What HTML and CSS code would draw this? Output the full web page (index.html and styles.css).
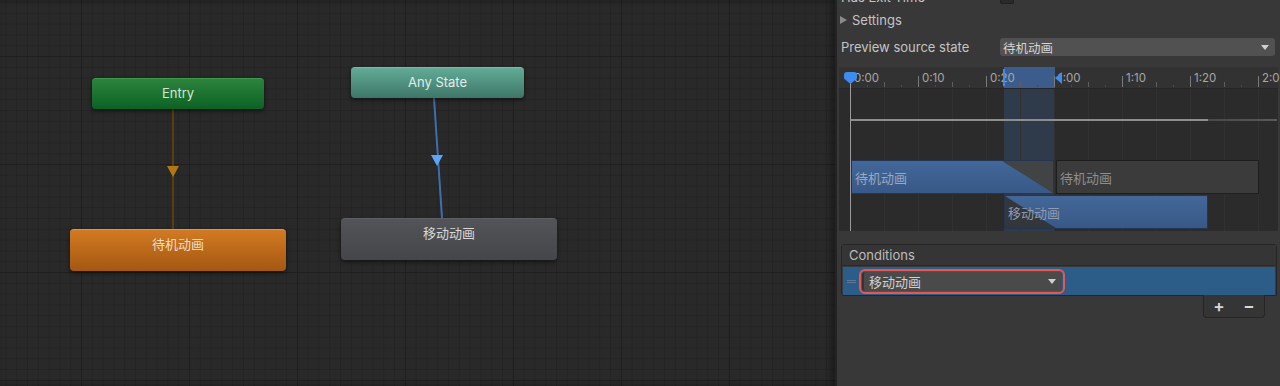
FILE: index.html
```html
<!DOCTYPE html>
<html lang="zh">
<head>
  <meta charset="UTF-8" />
  <title>Animator</title>
  <link rel="stylesheet" href="styles.css">
</head>
<body>

<div class="app">
  <div class="graph">
    <svg class="links" width="835" height="386">
      <line x1="173" y1="109" x2="173" y2="229" stroke="#5a3e10" stroke-width="2" />
      <polygon points="167,166 179,166 173,177" fill="#b07814" />
      <line x1="434" y1="98" x2="442" y2="218" stroke="#3d6fae" stroke-width="2" />
      <polygon points="431,155 443,155 437,166" fill="#5ca5f4" />
    </svg>
    <div class="node entry">Entry</div>
    <div class="node any">Any State</div>
    <div class="node idle">待机动画</div>
    <div class="node move">移动动画</div>
  </div>

  <aside class="inspector">
    <div class="row exit-row">
      <span class="label">Has Exit Time</span>
      <span class="checkbox"></span>
    </div>
    <div class="row foldout"><span class="caret"></span>Settings</div>
    <div class="row field">
      <span class="label">Preview source state</span>
      <div class="select">待机动画<span class="arrow"></span></div>
    </div>

    <div class="timeline">
      <div class="span-hl"></div>
      <div class="ruler">
        <svg class="ticks" width="439" height="21">
          <g stroke="#7a7a7a" stroke-width="1">
            <line x1="11.5" y1="9" x2="11.5" y2="20" />
            <line x1="79.5" y1="9" x2="79.5" y2="20" />
            <line x1="147.5" y1="9" x2="147.5" y2="20" />
            <line x1="215.5" y1="9" x2="215.5" y2="20" />
            <line x1="283.5" y1="9" x2="283.5" y2="20" />
            <line x1="351.5" y1="9" x2="351.5" y2="20" />
            <line x1="419.5" y1="9" x2="419.5" y2="20" />
          </g>
          <g stroke="#5e5e5e" stroke-width="1">
            <line x1="45.5" y1="15" x2="45.5" y2="20" />
            <line x1="113.5" y1="15" x2="113.5" y2="20" />
            <line x1="181.5" y1="15" x2="181.5" y2="20" />
            <line x1="249.5" y1="15" x2="249.5" y2="20" />
            <line x1="317.5" y1="15" x2="317.5" y2="20" />
            <line x1="385.5" y1="15" x2="385.5" y2="20" />
          </g>
          <g stroke="#4a4a4a" stroke-width="1">
            <line x1="28.5" y1="18" x2="28.5" y2="20" />
            <line x1="62.5" y1="18" x2="62.5" y2="20" />
            <line x1="96.5" y1="18" x2="96.5" y2="20" />
            <line x1="130.5" y1="18" x2="130.5" y2="20" />
            <line x1="164.5" y1="18" x2="164.5" y2="20" />
            <line x1="198.5" y1="18" x2="198.5" y2="20" />
            <line x1="232.5" y1="18" x2="232.5" y2="20" />
            <line x1="266.5" y1="18" x2="266.5" y2="20" />
            <line x1="300.5" y1="18" x2="300.5" y2="20" />
            <line x1="334.5" y1="18" x2="334.5" y2="20" />
            <line x1="368.5" y1="18" x2="368.5" y2="20" />
            <line x1="402.5" y1="18" x2="402.5" y2="20" />
          </g>
        </svg>
        <div class="marks">
          <span>0:00</span>
          <span>0:10</span>
          <span>0:20</span>
          <span>1:00</span>
          <span>1:10</span>
          <span>1:20</span>
          <span>2:00</span>
        </div>
      </div>
      <div class="tracks">
        <div class="curve"><span class="curve-lit"></span></div>
        <div class="clip-row first">
          <div class="clip blue out"><span class="clip-text">待机动画</span></div>
          <div class="clip grey"><span class="clip-text">待机动画</span></div>
        </div>
        <div class="clip-row second">
          <div class="clip blue in"><span class="clip-text">移动动画</span></div>
        </div>
      </div>
      <div class="playhead"><span class="head"></span></div>
      <span class="mark-start"></span>
      <span class="mark-end"></span>
    </div>

    <div class="conditions">
      <div class="cond-head">Conditions</div>
      <div class="cond-list">
        <div class="cond-row">
          <span class="handle"></span>
          <div class="select param">移动动画<span class="arrow"></span></div>
        </div>
      </div>
    </div>
    <div class="cond-foot">
      <span>+</span>
      <span>−</span>
    </div>
  </aside>
</div>

</body>
</html>
```

FILE: styles.css
```css
* {
  box-sizing: border-box;
}

body {
  margin: 0;
  background: #282828;
  font-family: Inter, "Noto Sans", "Noto Sans CJK SC", sans-serif;
  font-size: 13px;
  overflow: hidden;
}

.app {
  display: flex;
  width: 1280px;
  height: 386px;
}

/* graph canvas */

.graph {
  position: relative;
  width: 835px;
  height: 386px;
  background-color: #292929;
  background-image:
    linear-gradient(90deg, #1f1f1f 1px, transparent 1px),
    linear-gradient(#1f1f1f 1px, transparent 1px),
    linear-gradient(90deg, #242424 1px, transparent 1px),
    linear-gradient(#242424 1px, transparent 1px);
  background-size: 108px 108px, 108px 108px, 10.8px 10.8px, 10.8px 10.8px;
  background-position: 81px 56px, 81px 56px, 5.4px 2px, 5.4px 2px;
  box-shadow: inset -4px 0 6px rgba(0, 0, 0, 0.35);
}

.links {
  position: absolute;
  left: 0;
  top: 0;
}

.node {
  position: absolute;
  display: flex;
  justify-content: center;
  color: #dedede;
  border-radius: 4px;
  box-shadow: 0 2px 4px rgba(0, 0, 0, 0.5);
  line-height: 18px;
}

.entry {
  left: 92px;
  top: 78px;
  width: 172px;
  height: 31px;
  padding-top: 5px;
  background: linear-gradient(#2c833c, #0c6224);
  border-top: 1px solid #3f9a4f;
  color: #d6e4d6;
}

.any {
  left: 351px;
  top: 67px;
  width: 173px;
  height: 31px;
  padding-top: 5px;
  background: linear-gradient(#62ab96, #3d7667);
  border-top: 1px solid #77bba6;
  color: #e2ece8;
}

.idle {
  left: 70px;
  top: 229px;
  width: 216px;
  height: 42px;
  padding-top: 5px;
  background: linear-gradient(#d27a22, #a35811);
  border-top: 1px solid #e0954a;
  color: #f2dcc4;
}

.move {
  left: 341px;
  top: 218px;
  width: 216px;
  height: 42px;
  padding-top: 5px;
  background: linear-gradient(#535458, #45464a);
  border-top: 1px solid #5e5f63;
  color: #d8d8d8;
}

/* inspector */

.inspector {
  width: 445px;
  height: 386px;
  background: #383838;
  border-left: 2px solid #232323;
  padding: 0 2px;
  display: flex;
  flex-direction: column;
  color: #c4c4c4;
}

.row {
  display: flex;
  align-items: center;
  padding-left: 2px;
  flex-shrink: 0;
}

.label {
  width: 159px;
}

.exit-row {
  height: 18px;
  margin-top: -12px;
}

.checkbox {
  width: 14px;
  height: 14px;
  background: #2a2a2a;
  border: 1px solid #212121;
  border-radius: 2px;
}

.foldout {
  height: 18px;
  margin-top: 5px;
  padding-left: 1px;
}

.caret {
  width: 0;
  height: 0;
  border-top: 4px solid transparent;
  border-bottom: 4px solid transparent;
  border-left: 7px solid #8a8a8a;
  margin-right: 5px;
}

.field {
  height: 20px;
  margin-top: 8px;
}

.select {
  position: relative;
  display: flex;
  align-items: center;
  width: 275px;
  height: 18px;
  padding-left: 3px;
  background: #515151;
  border-radius: 3px;
  color: #d4d4d4;
  font-size: 12.5px;
}

.arrow {
  position: absolute;
  right: 6px;
  top: 7px;
  border-left: 4px solid transparent;
  border-right: 4px solid transparent;
  border-top: 5px solid #cfcfcf;
}

/* timeline */

.timeline {
  position: relative;
  height: 164px;
  margin-top: 10px;
  flex-shrink: 0;
  background: linear-gradient(#323232 0 21px, #2b2b2b 21px);
}

.span-hl {
  position: absolute;
  left: 165px;
  top: 0;
  width: 51px;
  height: 100%;
  background: linear-gradient(#3c5d8b 0 21px, #2f3b4b 21px);
}

.ruler {
  position: relative;
  height: 22px;
  border-bottom: 1px solid #262626;
}

.ticks {
  position: absolute;
  left: 0;
  top: 0;
}

.marks {
  position: relative;
  display: flex;
  padding-left: 15px;
  padding-top: 4px;
}

.marks span {
  width: 68px;
  flex-shrink: 0;
  font-size: 11.5px;
  color: #a6a6a6;
}

.tracks {
  position: relative;
  display: flex;
  flex-direction: column;
  height: 142px;
  background-image: linear-gradient(90deg, #313131 1px, transparent 1px);
  background-size: 34px 100%;
  background-position: 11px 0;
}

.curve {
  position: absolute;
  left: 11px;
  top: 30px;
  width: 427px;
  height: 2px;
  background: linear-gradient(90deg, #4a4a4a 85%, #5a5a5a);
}

.curve-lit {
  display: block;
  width: 358px;
  height: 2px;
  background: #8e8e8e;
}

.clip-row {
  display: flex;
  height: 34px;
  flex-shrink: 0;
}

.clip-row.first {
  margin-top: 71px;
}

.clip-row.second {
  margin-top: 1px;
}

.clip {
  position: relative;
  display: flex;
  align-items: center;
  height: 34px;
  padding-left: 3px;
  font-size: 13px;
  overflow: hidden;
}

.clip.blue {
  background: linear-gradient(#43679a, #385987);
  border: 1px solid #24364f;
  color: #9aa8bc;
}

.clip.grey {
  width: 203px;
  margin-left: 2px;
  background: #3b3b3b;
  border: 1px solid #1e1e1e;
  color: #8e8e8e;
}

.first .blue {
  width: 203px;
  margin-left: 12px;
}

.second .blue {
  width: 204px;
  margin-left: 165px;
}

.clip.out::after {
  content: "";
  position: absolute;
  right: 0;
  top: 0;
  width: 51px;
  height: 100%;
  background: #414345;
  clip-path: polygon(0 0, 100% 0, 100% 100%);
}

.clip.in::before {
  content: "";
  position: absolute;
  left: 0;
  top: 0;
  width: 51px;
  height: 100%;
  background: #33373c;
  clip-path: polygon(0 0, 100% 100%, 0 100%);
}

.clip.in {
  color: #8d9ab0;
}

.clip-text {
  position: relative;
}

.playhead {
  position: absolute;
  left: 11px;
  top: 17px;
  width: 1px;
  height: 147px;
  background: #9a9a9a;
}

.head {
  position: absolute;
  left: -6px;
  top: -12px;
  width: 13px;
  height: 12px;
  background: #3f8cf0;
  border-radius: 3px 3px 0 0;
  clip-path: polygon(0 0, 100% 0, 100% 55%, 50% 100%, 0 55%);
}

.mark-start {
  position: absolute;
  left: 164px;
  top: 2px;
  width: 2px;
  height: 17px;
  background: #3f8cf0;
}

.mark-end {
  position: absolute;
  left: 216px;
  top: 5px;
  width: 0;
  height: 0;
  border-top: 6px solid transparent;
  border-bottom: 6px solid transparent;
  border-right: 7px solid #3f8cf0;
}

/* conditions */

.conditions {
  margin: 13px 1px 0 2px;
  border: 1px solid #262626;
  border-radius: 3px 3px 0 3px;
  background: #3a3a3a;
  flex-shrink: 0;
}

.cond-head {
  height: 21px;
  padding-left: 7px;
  display: flex;
  align-items: center;
  background: #353535;
  border-bottom: 1px solid #2a2a2a;
  color: #bcbcbc;
}

.cond-list {
  padding: 1px 1px 0;
}

.cond-row {
  display: flex;
  align-items: center;
  height: 28px;
  background: #2c5d88;
}

.handle {
  width: 9px;
  height: 3px;
  margin: 0 6px 0 4px;
  border-top: 1px solid #5a7a98;
  border-bottom: 1px solid #5a7a98;
}

.select.param {
  width: 200px;
  height: 19px;
  padding-left: 5px;
  background: #4a4a4a;
  outline: 2px solid #e8574f;
  outline-offset: 1px;
  border-left: 2px solid #333;
  border-radius: 3px;
  color: #d0d0d0;
  font-size: 13px;
}

.cond-foot {
  display: flex;
  justify-content: space-around;
  align-items: center;
  align-self: flex-end;
  width: 62px;
  height: 23px;
  margin-right: 13px;
  margin-top: -1px;
  background: #353535;
  border: 1px solid #262626;
  border-top: none;
  border-radius: 0 0 4px 4px;
  color: #d8d8d8;
  font-size: 17px;
  font-weight: 600;
}
```
